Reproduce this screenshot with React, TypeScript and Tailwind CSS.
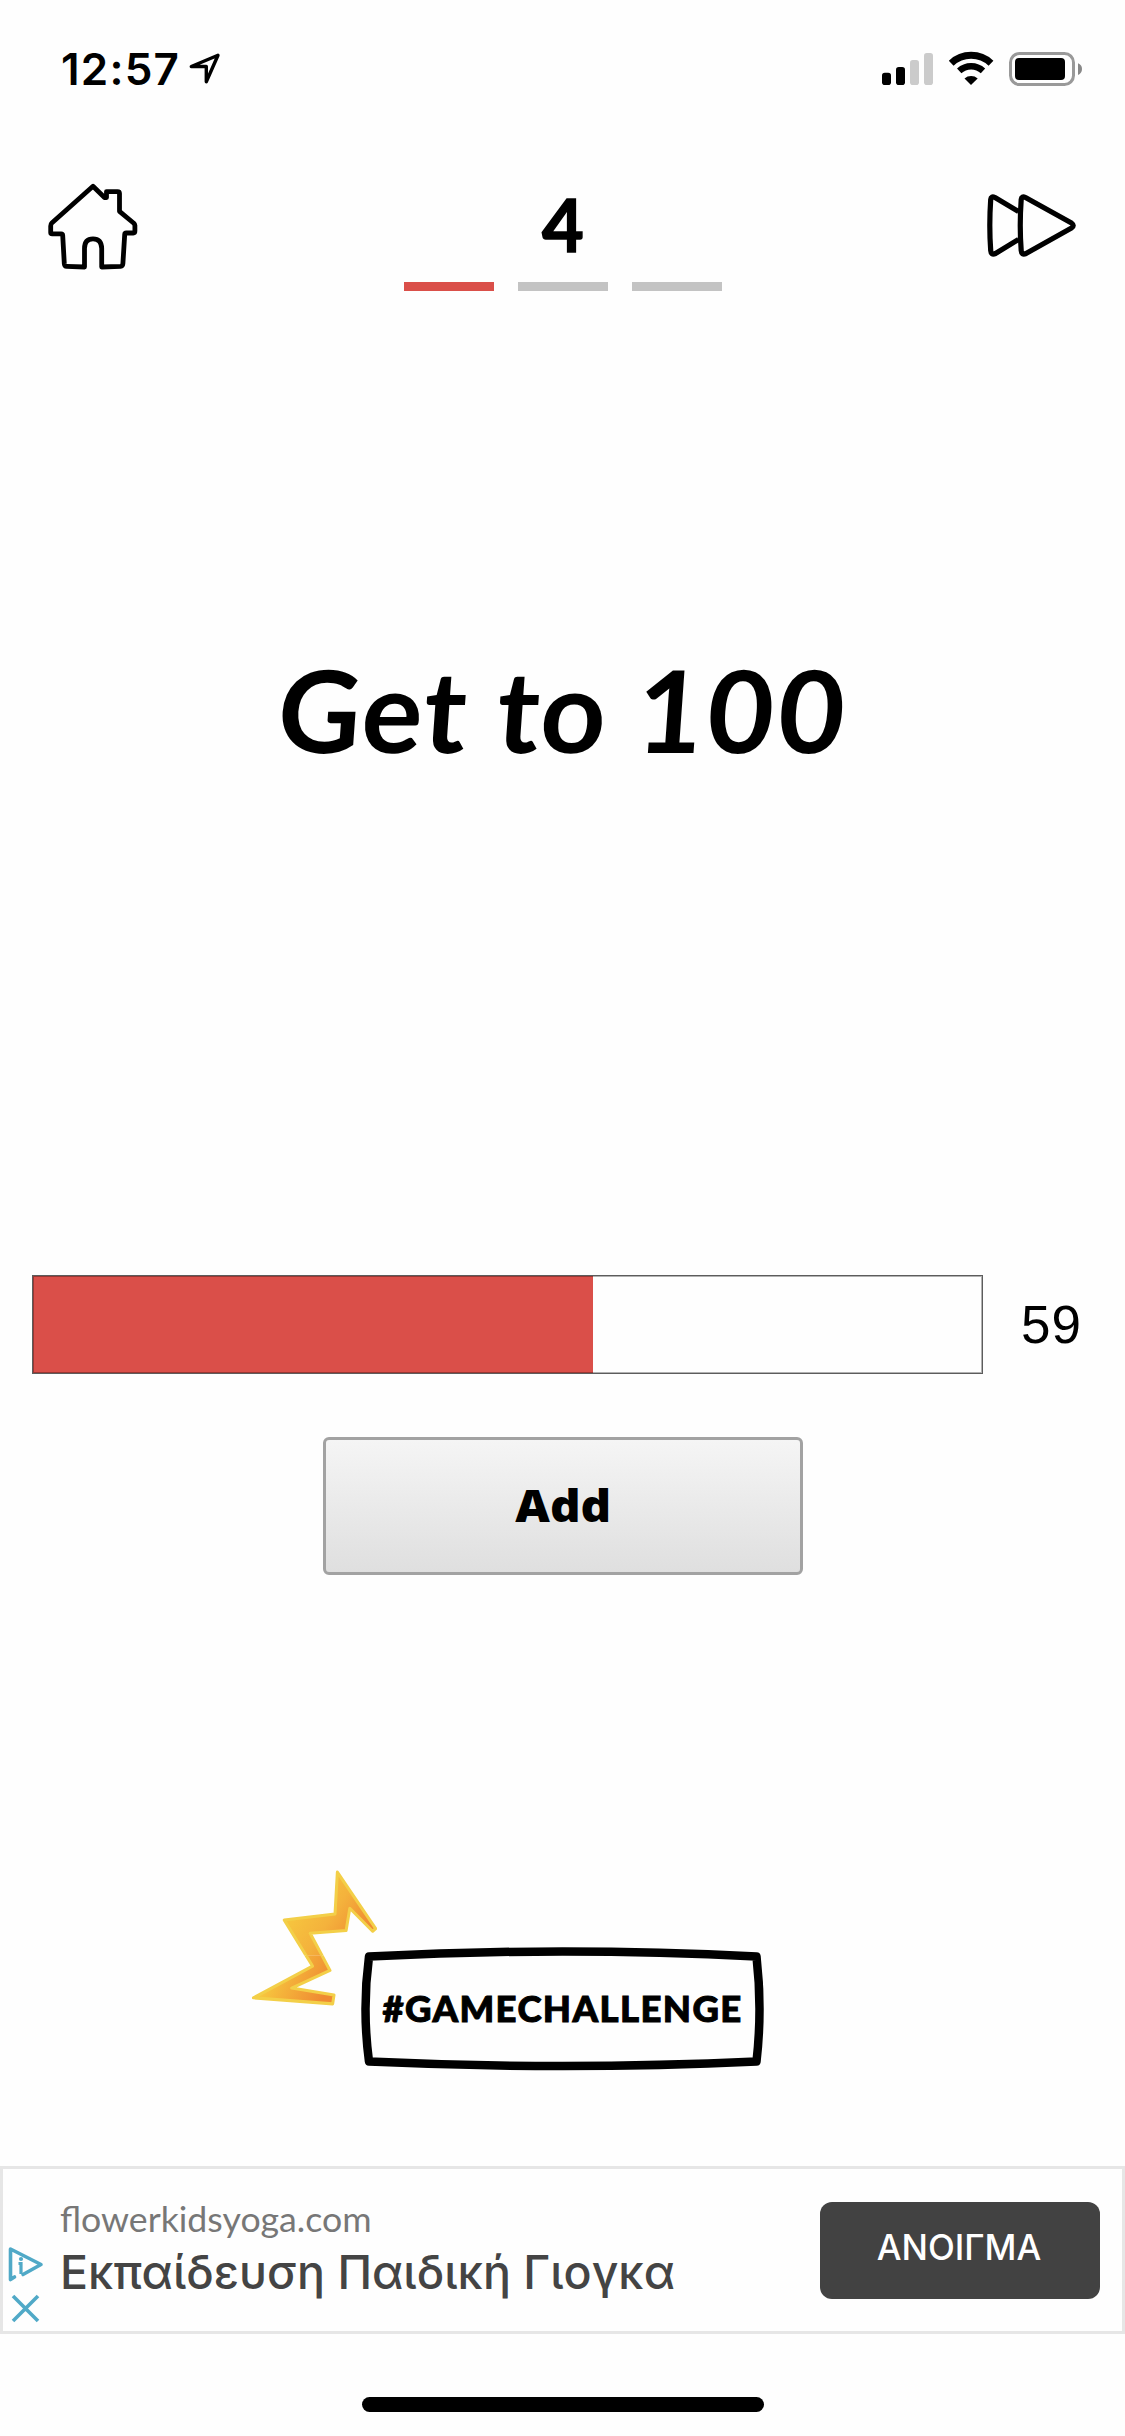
import React from "react";

function StatusBar() {
  return (
    <div className="flex h-[138px] shrink-0 items-start justify-between pr-[43px] pl-[61px]">
      <div className="flex items-start pt-[42px]">
        <span className="font-['Inter',sans-serif] text-[44px] leading-[54px] font-semibold tracking-[1.2px]">12:57</span>
        <svg className="mt-[10px] ml-[8px]" width="34" height="34" viewBox="0 0 34 34" fill="none" stroke="#000" strokeWidth="3.4" strokeLinejoin="round">
          <path d="M30 3.2 3.3 14.5H18.3V29.8Z" />
        </svg>
      </div>
      <div className="flex pt-[51px]">
        <svg width="201" height="36" viewBox="0 0 201 36">
          <g>
            <rect x="1" y="21.7" width="9" height="12.3" rx="2.8" />
            <rect x="15" y="16" width="9" height="18" rx="2.8" />
            <rect x="29" y="9" width="9" height="25" rx="2.8" fill="#cbcbcb" />
            <rect x="43" y="2" width="9" height="32" rx="2.8" fill="#cbcbcb" />
          </g>
          <g fill="none" stroke="#000">
            <path d="M70.2 12.2A29 29 0 0 1 110 12.2" strokeWidth="7" />
            <path d="M78.2 19.9A17.5 17.5 0 0 1 102 19.9" strokeWidth="6.4" />
          </g>
          <path d="M90 34 83.5 27.6A10 10 0 0 1 96.7 27.6Z" />
          <rect x="129.5" y="2.5" width="63" height="31" rx="9" fill="none" stroke="#999" strokeWidth="3" />
          <rect x="134" y="7" width="50" height="22" rx="4" />
          <path d="M197 12.3Q201 13.7 201 18T197 23.9Z" fill="#888" />
        </svg>
      </div>
    </div>
  );
}

function LevelHeader() {
  return (
    <header className="flex h-[170px] shrink-0 items-start justify-between px-[46px]">
      <svg className="mt-[43px]" width="94" height="92" viewBox="0 0 94 92" fill="none" stroke="#000" strokeWidth="4.8" strokeLinejoin="round" strokeLinecap="round">
        <path d="M47 5.2 5.8 42Q4.7 43 4.7 45V51.5Q4.7 52.9 6.2 52.9H15.2Q16.6 52.9 16.7 54.3L18.3 82.7Q18.6 85.3 20.6 85.4L38.5 86V67.5Q38.5 57.8 47 57.8T55.7 67.5V86L74.5 85.3Q76.7 85 76.9 82.5L78.7 53.5Q78.8 52 80.3 52H87.3Q88.9 52 88.9 50V44.5Q88.8 43 87.5 42L73.5 30.3V12.5Q73.5 10.6 71.5 10.6H60.5V16.5H58.5Z" />
      </svg>
      <div className="flex w-[318px] flex-col items-center">
        <h2 className="mt-[41px] h-[103px] pl-px font-['Lato',sans-serif] text-[72px] leading-[90px] font-bold [-webkit-text-stroke:1.5px_black]">4</h2>
        <div className="flex gap-6">
          <span className="h-[9px] w-[90px] bg-[#da4f49]" />
          <span className="h-[9px] w-[90px] bg-[#c3c3c3]" />
          <span className="h-[9px] w-[90px] bg-[#c3c3c3]" />
        </div>
      </div>
      <svg className="mt-[53px]" width="94" height="70" viewBox="1.5 0 94 70" fill="none" stroke="#000" strokeWidth="5.2" strokeLinejoin="round">
        <path d="M35 20.5 11.5 6.5Q7.5 4.5 7.2 8.5Q5.4 35 7.2 59.5Q7.5 64.5 12 62.5L35 48.5" />
        <path d="M42 6.5Q38 4.5 37.7 8.5Q35.8 35 37.7 59.5Q38 64.5 42.5 62.5L88 37Q91.5 34.5 88 32Z" />
      </svg>
    </header>
  );
}

function ProgressRow({ value }: { value: number }) {
  return (
    <div className="flex h-[99px] shrink-0 items-center pl-8">
      <div className="relative h-full w-[951px]">
        <div className="h-full bg-[#da4f49]" style={{ width: `${value}%` }} />
        <div className="absolute inset-0 border border-[#5c5c5c]" />
        <div className="absolute inset-px border border-black/30" />
      </div>
      <span className="ml-[38px] font-['Liberation_Sans',Arial,sans-serif] text-[53px] leading-[60px] tracking-[1px]">{value}</span>
    </div>
  );
}

const BOLT = "M278 24 392 191 383 199 315 131 304 197 197 205 256 315 142 367 268 388 264 414 28 396 204 302 120 166 271 148Z";

function Brand() {
  return (
    <div className="relative mt-[370px] ml-[360px] flex h-[126px] w-[405px] shrink-0 items-center justify-center">
      <svg className="absolute inset-0" width="405" height="126" viewBox="0 0 405 126" fill="none" stroke="#000" strokeLinejoin="round">
        <path d="M9 11.5Q202.5 1.5 396.5 11.5Q402.5 64 396.5 116.5Q202.5 125.500 9 116.5Q2 64 9 11.5Z" strokeWidth="8.5" />
      </svg>
      <svg className="absolute -top-[81px] -left-[116px]" width="133" height="148" viewBox="0 0 396 438" preserveAspectRatio="none">
        <defs>
          <linearGradient id="bolt-a" gradientUnits="userSpaceOnUse" x1="145" y1="90" x2="345" y2="225">
            <stop offset="0" stopColor="#f7cb3f" />
            <stop offset="0.55" stopColor="#f4b23c" />
            <stop offset="1" stopColor="#ef8a32" />
          </linearGradient>
          <linearGradient id="bolt-b" gradientUnits="userSpaceOnUse" x1="90" y1="290" x2="250" y2="365">
            <stop offset="0" stopColor="#f7c83f" />
            <stop offset="1" stopColor="#ef8a32" />
          </linearGradient>
          <clipPath id="bolt-top"><path d="M0 0H396V270H0Z" /></clipPath>
          <clipPath id="bolt-low"><path d="M0 270H396V438H0Z" /></clipPath>
        </defs>
        <g stroke="#f3cf48" strokeWidth="9" strokeLinejoin="round">
          <path d={BOLT} fill="url(#bolt-a)" clipPath="url(#bolt-top)" />
          <path d={BOLT} fill="url(#bolt-b)" clipPath="url(#bolt-low)" />
        </g>
      </svg>
      <span className="font-['Lato',sans-serif] text-[36.5px] leading-none font-black tracking-[1.4px] whitespace-nowrap [-webkit-text-stroke:1px_black]">#GAMECHALLENGE</span>
    </div>
  );
}

function AdBanner() {
  return (
    <section className="mt-[95px] flex h-[168px] shrink-0 items-start border-3 border-[#e6e6e6]">
      <svg className="mt-[75px] ml-[3px] shrink-0" width="40" height="82" viewBox="0 0 40 82" fill="none" stroke="#50a9c7" strokeLinecap="round" strokeLinejoin="round">
        <path d="M8.5 33 4.5 35.500V5L35 20.5 17 30.500" strokeWidth="3.6" />
        <path d="M12.500 19.500H15V30" strokeWidth="3.200" strokeLinecap="butt" strokeLinejoin="miter" />
        <circle cx="15" cy="15" r="2.100" fill="#50a9c7" stroke="none" />
        <path d="M7 52 32 77M32 52 7 77" strokeWidth="3.6" strokeLinecap="butt" />
      </svg>
      <div className="ml-[14px] flex w-[757px] shrink-0 flex-col pt-[30px] whitespace-nowrap">
        <span className="origin-left scale-x-[1.05] font-['Lato',sans-serif] text-[34px] leading-[40px] text-[#777]">flowerkidsyoga.com</span>
        <span className="mt-[5px] font-['Inter',sans-serif] text-[46.5px] leading-[56px] font-medium text-[#444]">Εκπαίδευση Παιδική Γιογκα</span>
      </div>
      <button className="mt-[33px] ml-[3px] flex h-[97px] w-[280px] shrink-0 items-center justify-center rounded-xl bg-[#424242] pr-[2px] pb-[6px] font-['Inter',sans-serif] text-[35px] font-medium text-white">
        ΑΝΟΙΓΜΑ
      </button>
    </section>
  );
}

export default function App() {
  return (
    <main className="flex h-[2436px] w-[1125px] flex-col overflow-hidden bg-[#fefefe] text-black">
      <StatusBar />
      <LevelHeader />
      <h1 className="mt-[331px] mb-[496px] h-[140px] shrink-0 -skew-x-4 pl-[3px] text-center font-['Lato',sans-serif] text-[114px] leading-[140px] font-bold tracking-[1.6px]">
        Get to <span className="tracking-[4.5px]">100</span>
      </h1>
      <ProgressRow value={59} />
      <button className="mt-[63px] ml-[323px] flex h-[138px] w-[480px] shrink-0 items-center justify-center rounded-[6px] border-3 border-[#a2a2a2] bg-linear-to-b from-[#f5f5f5] to-[#dfdfdf] pb-[2px] font-['Open_Sans',sans-serif] text-[45px] font-extrabold">
        <span className="scale-x-[1.06]">Add</span>
      </button>
      <Brand />
      <AdBanner />
      <div className="mt-[63px] ml-[362px] h-[15px] w-[402px] shrink-0 rounded-full bg-black" />
    </main>
  );
}
